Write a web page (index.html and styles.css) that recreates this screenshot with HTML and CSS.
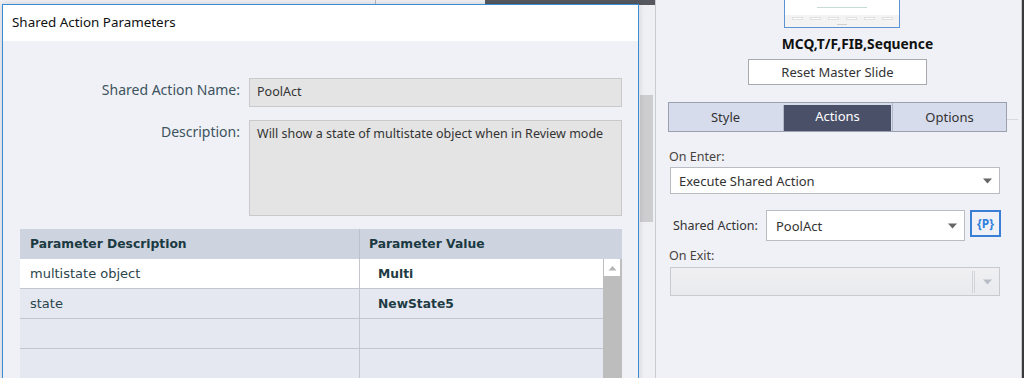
FILE: index.html
```html
<!DOCTYPE html>
<html lang="en">
<head>
  <meta charset="UTF-8">
  <title>Shared Action Parameters</title>
  <link rel="stylesheet" href="styles.css">
</head>
<body>

  <div class="app">

    <div class="workspace">
      <div class="top-strip">
        <div class="strip-tab"></div>
        <div class="strip-dark"></div>
      </div>
      <div class="ws-scroll"></div>

      <!-- dialog window floats over the workspace -->
      <div class="dialog">
        <div class="dialog-title">Shared Action Parameters</div>
        <div class="dialog-body">
          <div class="form-grid">
            <label class="form-label">Shared Action Name:</label>
            <div class="field field-name">PoolAct</div>
            <label class="form-label">Description:</label>
            <div class="field field-desc">Will show a state of multistate object when in Review mode</div>
          </div>

          <div class="param-table">
            <div class="param-head">
              <div class="cell col-desc">Parameter Description</div>
              <div class="cell col-val">Parameter Value</div>
              <div class="cell col-sb"></div>
            </div>
            <div class="param-body">
              <div class="rows">
                <div class="row row-selected">
                  <div class="cell col-desc">multistate object</div>
                  <div class="cell col-val">Multi</div>
                </div>
                <div class="row">
                  <div class="cell col-desc">state</div>
                  <div class="cell col-val">NewState5</div>
                </div>
                <div class="row">
                  <div class="cell col-desc"></div>
                  <div class="cell col-val"></div>
                </div>
                <div class="row">
                  <div class="cell col-desc"></div>
                  <div class="cell col-val"></div>
                </div>
              </div>
              <div class="scrollbar">
                <div class="sb-up">
                  <svg width="9" height="6" viewBox="0 0 9 6"><path d="M0.5 5.5 L4.5 1 L8.5 5.5 Z" fill="#b5b5b5"/></svg>
                </div>
                <div class="sb-track"></div>
              </div>
            </div>
          </div>
        </div>
      </div>
    </div>

    <div class="props">
      <div class="thumb">
        <div class="thumb-top"><span class="thumb-line"></span></div>
        <div class="thumb-bottom">
          <div class="thumb-btns">
            <span></span><span></span><span></span><span></span><span></span><span></span>
          </div>
          <span class="thumb-sub"></span>
        </div>
      </div>
      <div class="master-name">MCQ,T/F,FIB,Sequence</div>
      <button class="btn-reset">Reset Master Slide</button>

      <div class="tabs-wrap">
        <div class="tabs">
          <div class="tab">Style</div>
          <div class="tab tab-active">Actions</div>
          <div class="tab">Options</div>
        </div>
      </div>

      <div class="prop-label">On Enter:</div>
      <div class="select">
        <span>Execute Shared Action</span>
        <svg class="caret" width="9" height="6" viewBox="0 0 9 6"><path d="M0 0.5 H9 L4.5 5.5 Z" fill="#666"/></svg>
      </div>

      <div class="shared-row">
        <div class="shared-label">Shared Action:</div>
        <div class="select select-small">
          <span>PoolAct</span>
          <svg class="caret" width="9" height="6" viewBox="0 0 9 6"><path d="M0 0.5 H9 L4.5 5.5 Z" fill="#666"/></svg>
        </div>
        <div class="btn-p">{P}</div>
      </div>

      <div class="prop-label label-exit">On Exit:</div>
      <div class="select select-disabled">
        <span></span>
        <span class="sel-divider"></span>
        <svg class="caret" width="9" height="6" viewBox="0 0 9 6"><path d="M0 0.5 H9 L4.5 5.5 Z" fill="#b8bcc6"/></svg>
      </div>
    </div>

    <div class="edge"></div>
  </div>

</body>
</html>
```

FILE: styles.css
```css
:root {
  --app-bg: #f0f1f6;
  --dialog-bg: #eff1f6;
  --field-bg: #e4e4e4;
  --field-border: #c9c9c9;
  --label-color: #3d535e;
  --head-bg: #cdd3df;
  --row-alt: #e5e8f0;
  --row-line: #c3c6cc;
  --accent: #3a8ad6;
}
* {
  box-sizing: border-box;
}
body {
  margin: 0;
  width: 1024px;
  height: 378px;
  overflow: hidden;
  background-color: var(--app-bg);
  font-family: "Noto Sans", "Open Sans", sans-serif;
  color: #333;
}
.app {
  display: flex;
  height: 378px;
}

/* workspace behind the dialog */
.workspace {
  position: relative;
  width: 656px;
  flex-shrink: 0;
  border-right: 1px solid #c9cbd1;
  background-color: #eef0f4;
}
.top-strip {
  display: flex;
  height: 5px;
  padding-left: 375px;
}
.strip-tab {
  width: 110px;
  border-left: 1px solid #b8b8b8;
}
.strip-dark {
  flex: 1;
  background-color: #56585f;
}
.ws-scroll {
  margin: 90px 0 0 640px;
  width: 13px;
  height: 127px;
  background-color: #cdcdcf;
}

.dialog {
  position: absolute;
  left: 2px;
  top: 4px;
  width: 637px;
  height: 380px;
  border: 1px solid var(--accent);
  background-color: var(--dialog-bg);
  box-shadow: 0 0 6px rgba(0,0,0,0.15);
}
.dialog-title {
  height: 36px;
  padding: 8px 0 0 9px;
  background-color: #fff;
  font-size: 13.4px;
  color: #111;
}
.dialog-body {
  padding: 37px 15px 0 17px;
}
.form-grid {
  display: grid;
  grid-template-columns: 220px 373px;
  column-gap: 9px;
  row-gap: 13px;
}
.form-label {
  text-align: right;
  font-size: 14px;
  color: var(--label-color);
  line-height: 22px;
  padding-top: 1px;
}
.field {
  background-color: var(--field-bg);
  border: 1px solid var(--field-border);
  padding: 3px 7px;
  font-size: 12.5px;
  color: #333;
}
.field-name {
  height: 29px;
  line-height: 20px;
}
.field-desc {
  height: 96px;
  line-height: 20px;
}

/* parameter table */
.param-table {
  margin-top: 13px;
  width: 602px;
  font-family: "DejaVu Sans", Verdana, sans-serif;
  font-size: 13px;
  color: #2b454d;
}
.param-head {
  display: flex;
  height: 30px;
  background-color: var(--head-bg);
  font-weight: bold;
  font-size: 12.3px;
  color: #1b3a42;
}
.cell {
  display: flex;
  align-items: center;
}
.col-desc {
  width: 340px;
  padding-left: 10px;
  border-right: 1px solid #bcc2cc;
}
.col-val {
  flex: 1;
  padding-left: 9px;
}
.param-head .col-sb {
  width: 19px;
}
.param-body {
  display: flex;
}
.rows {
  flex: 1;
}
.row {
  display: flex;
  height: 30px;
  background-color: var(--row-alt);
  border-bottom: 1px solid var(--row-line);
}
.row .col-desc {
  border-right: 1px solid var(--row-line);
}
.row .col-val {
  padding-left: 18px;
  font-weight: bold;
  font-size: 12.3px;
  color: #1f3c44;
}
.row-selected {
  background-color: #fff;
}
.scrollbar {
  width: 19px;
  display: flex;
  flex-direction: column;
  background-color: #bdbdbd;
}
.sb-up {
  height: 17px;
  margin: 0 2px 0 1px;
  background-color: #fff;
  display: flex;
  align-items: center;
  justify-content: center;
}
.sb-track {
  flex: 1;
}

/* properties panel */
.props {
  width: 362px;
  flex-shrink: 0;
  padding: 0 12px 0 13px;
  display: flex;
  flex-direction: column;
}
.thumb {
  align-self: center;
  width: 116px;
  height: 28px;
  margin-left: 9px;
  border: 1px solid #5b93d3;
  border-top: none;
  background-color: #f3f3f3;
}
.thumb-top {
  height: 15px;
  background-color: #fff;
  display: flex;
  justify-content: center;
  align-items: center;
}
.thumb-line {
  width: 50px;
  height: 1px;
  background-color: #c6dcd0;
}
.thumb-bottom {
  display: flex;
  flex-direction: column;
  align-items: center;
  padding-top: 2px;
  gap: 4px;
}
.thumb-btns {
  display: flex;
  gap: 7px;
}
.thumb-btns span {
  width: 11px;
  height: 3px;
  background-color: #fff;
  border: 1px solid #e0e0e0;
}
.thumb-sub {
  width: 10px;
  height: 1px;
  background-color: #cfcfcf;
}
.master-name {
  text-align: center;
  font-weight: bold;
  font-size: 13.8px;
  color: #111;
  margin-top: 6px;
  height: 21px;
  padding-left: 40px;
}
.btn-reset {
  align-self: center;
  width: 179px;
  height: 26px;
  margin-top: 4px;
  margin-left: 0;
  background-color: #fff;
  border: 1px solid #a9a9ab;
  font-family: inherit;
  font-size: 13px;
  color: #333;
  padding: 0;
}
.tabs-wrap {
  margin: 17px -12px 0 0;
  border-bottom: 1px solid #d7d9df;
  height: 18px;
}
.tabs {
  display: flex;
  width: 339px;
  height: 30px;
  margin-left: -1px;
  border: 1px solid #9aa0ad;
  background-color: #d7dcec;
}
.tab {
  flex: 1;
  text-align: center;
  font-size: 13px;
  line-height: 28px;
  color: #333;
}
.tab + .tab {
  border-left: 1px solid #b3b8c6;
}
.tab-active {
  flex: 0 0 108px;
  margin: 2px 1px 0;
  line-height: 22px;
  background-color: #4b5069;
  color: #fff;
}
.prop-label {
  font-size: 12.5px;
  color: #47423e;
  margin-top: 28px;
  height: 18px;
}
.select {
  display: flex;
  align-items: center;
  justify-content: space-between;
  width: 330px;
  height: 27px;
  margin-top: 1px;
  margin-left: 1px;
  padding: 0 7px 0 8px;
  background-color: #fff;
  border: 1px solid #b9bcc3;
  font-size: 13px;
  color: #333;
}
.shared-row {
  display: flex;
  align-items: center;
  margin-top: 16px;
  margin-left: 4px;
}
.shared-label {
  font-size: 12.5px;
  color: #333;
  width: 93px;
}
.select-small {
  width: 199px;
  height: 31px;
  margin: 0;
  padding-left: 9px;
}
.btn-p {
  width: 31px;
  height: 27px;
  margin-left: 5px;
  margin-top: -4px;
  border: 2px solid #3a7fd6;
  color: #2f7fdc;
  font-weight: bold;
  font-size: 12px;
  display: flex;
  align-items: center;
  justify-content: center;
}
.label-exit {
  margin-top: 6px;
}
.select-disabled {
  height: 29px;
  margin-top: 2px;
  background: linear-gradient(#f0f0f2, #e9eaee);
  border-color: #c8cacf;
}
.sel-divider {
  margin-left: auto;
  margin-right: 8px;
  width: 3px;
  height: 22px;
  border-left: 1px solid #d3d4d8;
  border-right: 1px solid #d3d4d8;
}
.edge {
  flex: 1;
  border-left: 1px solid #c9cbd1;
  background-color: #3a3a3c;
  margin-left: 3px;
}
```
